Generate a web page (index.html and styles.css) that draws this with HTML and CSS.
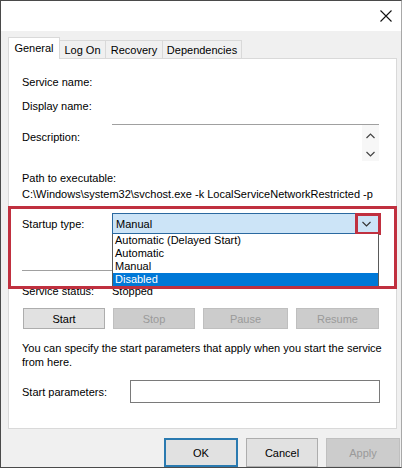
FILE: index.html
```html
<!DOCTYPE html>
<html>
<head>
<meta charset="utf-8">
<link rel="stylesheet" href="styles.css">
</head>
<body>
<div class="window">
  <div class="titlebar">
    <div class="close">
      <svg width="12" height="12" viewBox="0 0 12 12"><path d="M0.5 0.5 L11.5 11.5 M11.5 0.5 L0.5 11.5" stroke="#111" stroke-width="1.1" fill="none"/></svg>
    </div>
  </div>
  <div class="content">
    <div class="tabs">
      <div class="tab active t-general">General</div>
      <div class="tab t-logon">Log On</div>
      <div class="tab t-recovery">Recovery</div>
      <div class="tab t-deps">Dependencies</div>
    </div>
    <div class="panel">
      <div class="row r1"><span class="label">Service name:</span></div>
      <div class="row r2"><span class="label">Display name:</span></div>
      <div class="desc-row">
        <span class="label desc-label">Description:</span>
        <div class="desc-box">
          <div class="scroll">
            <svg width="9" height="6" viewBox="0 0 9 6"><path d="M0.5 5 L4.5 1 L8.5 5" stroke="#444" stroke-width="1.2" fill="none"/></svg>
            <svg width="9" height="6" viewBox="0 0 9 6"><path d="M0.5 1 L4.5 5 L8.5 1" stroke="#444" stroke-width="1.2" fill="none"/></svg>
          </div>
        </div>
      </div>
      <div class="line path-label">Path to executable:</div>
      <div class="line path-value">C:\Windows\system32\svchost.exe -k LocalServiceNetworkRestricted -p</div>
      <div class="startup-row">
        <span class="label">Startup type:</span>
        <div class="combo-wrap">
          <div class="combo">
            <span class="combo-text">Manual</span>
            <svg class="combo-arrow" width="9" height="6" viewBox="0 0 9 6"><path d="M0.5 1 L4.5 5 L8.5 1" stroke="#333" stroke-width="1.1" fill="none"/></svg>
          </div>
          <div class="arrow-mark"></div>
          <ul class="dropdown">
            <li>Automatic (Delayed Start)</li>
            <li>Automatic</li>
            <li>Manual</li>
            <li class="sel">Disabled</li>
          </ul>
        </div>
      </div>
      <div class="separator"></div>
      <div class="status-row">
        <span class="label">Service status:</span>
        <span>Stopped</span>
      </div>
      <div class="btn-row">
        <div class="btn b-start">Start</div>
        <div class="btn disabled b-stop">Stop</div>
        <div class="btn disabled b-pause">Pause</div>
        <div class="btn disabled b-resume">Resume</div>
      </div>
      <div class="info">You can specify the start parameters that apply when you start the service from here.</div>
      <div class="params-row">
        <span class="label params-label">Start parameters:</span>
        <div class="input"></div>
      </div>
    </div>
    <div class="footer">
      <div class="btn fbtn ok">OK</div>
      <div class="btn fbtn cancel">Cancel</div>
      <div class="btn fbtn disabled apply">Apply</div>
    </div>
  </div>
  <div class="highlight"></div>
</div>
</body>
</html>
```

FILE: styles.css
```css
html, body {
  margin: 0;
  padding: 0;
  background: #ffffff;
}
body {
  font-family: "Liberation Sans", Arial, sans-serif;
  font-size: 11px;
  color: #000;
}
.window {
  position: relative;
  width: 402px;
  height: 468px;
  box-sizing: border-box;
  border: 1px solid #4a4a4a;
  border-right-color: #a8a8a8;
  background: #f0f0f0;
}
.titlebar {
  height: 30px;
  background: #fff;
  display: flex;
  justify-content: flex-end;
  align-items: center;
}
.close {
  width: 22px;
  height: 30px;
  margin-right: 4px;
  display: flex;
  align-items: center;
  justify-content: center;
}
.content {
  padding: 6px 1px 0 7px;
}
.tabs {
  display: flex;
  align-items: flex-end;
  height: 21px;
}
.tab {
  box-sizing: border-box;
  height: 18px;
  border: 1px solid #d9d9d9;
  border-bottom: none;
  background: #f0f0f0;
  display: flex;
  align-items: center;
  justify-content: center;
  margin-left: -1px;
  padding-top: 1px;
}
.tab.active {
  height: 22px;
  margin-left: 0;
  margin-bottom: -1px;
  background: #fff;
  position: relative;
  z-index: 2;
  padding-top: 0;
  padding-bottom: 2px;
}
.t-general { width: 52px; }
.t-logon { width: 47px; }
.t-recovery { width: 58px; }
.t-deps { width: 80px; }
.panel {
  position: relative;
  box-sizing: border-box;
  width: 389px;
  height: 371px;
  background: #fff;
  border: 1px solid #d9d9d9;
  padding: 11px 0 0 13px;
}
.row {
  height: 24px;
  display: flex;
  align-items: center;
}
.label {
  line-height: 14px;
}
.desc-row {
  height: 53px;
  display: flex;
}
.desc-label {
  width: 90px;
  margin-top: 12px;
  flex: none;
}
.desc-box {
  margin-top: 6px;
  width: 267px;
  height: 38px;
  box-sizing: border-box;
  border-top: 1px solid #a0a0a0;
  display: flex;
  justify-content: flex-end;
}
.scroll {
  width: 17px;
  height: 36px;
  background: #f7f7f7;
  display: flex;
  flex-direction: column;
  align-items: center;
  justify-content: space-between;
  padding: 8px 0 4px;
  box-sizing: border-box;
  margin-right: 0;
}
.line {
  line-height: 14px;
  white-space: nowrap;
}
.path-value {
  margin-top: 2px;
}
.startup-row {
  margin-top: 12px;
  display: flex;
  align-items: center;
  height: 21px;
}
.startup-row .label {
  width: 90px;
  flex: none;
}
.combo-wrap {
  position: relative;
  width: 267px;
  height: 21px;
}
.combo {
  box-sizing: border-box;
  height: 21px;
  background: #cce4f7;
  border: 1px solid #2a69a0;
  display: flex;
  align-items: center;
  justify-content: space-between;
  padding: 0 7px 0 3px;
}
.arrow-mark {
  position: absolute;
  left: 243px;
  top: 0;
  width: 26px;
  height: 22px;
  box-sizing: border-box;
  border: 3px solid #c0303f;
}
.dropdown {
  position: absolute;
  left: 0;
  top: 21px;
  width: 267px;
  box-sizing: border-box;
  margin: 0;
  padding: 0 0 1px;
  list-style: none;
  background: #fff;
  border: 1px solid #5a5a5a;
  border-top: none;
  z-index: 3;
}
.dropdown li {
  height: 13px;
  line-height: 13px;
  padding-left: 2px;
  white-space: nowrap;
}
.dropdown li.sel {
  background: #0078d7;
  color: #fff;
}
.separator {
  margin-top: 36px;
  width: 357px;
  height: 1px;
  background: #a0a0a0;
}
.status-row {
  margin-top: 13px;
  display: flex;
  line-height: 14px;
}
.status-row .label {
  width: 90px;
  flex: none;
}
.btn-row {
  margin-top: 10px;
  padding-left: 1px;
  display: flex;
  gap: 8px;
}
.btn {
  box-sizing: border-box;
  height: 21px;
  background: #e1e1e1;
  border: 1px solid #adadad;
  display: flex;
  align-items: center;
  justify-content: center;
}
.btn.disabled {
  background: #cccccc;
  border-color: #bfbfbf;
  color: #9a9a9a;
}
.b-start { width: 82px; }
.b-stop { width: 82px; }
.b-pause { width: 85px; }
.b-resume { width: 83px; }
.info {
  margin-top: 12px;
  line-height: 14px;
  width: 360px;
}
.params-row {
  margin-top: 11px;
  display: flex;
  align-items: center;
}
.params-label {
  width: 108px;
  flex: none;
}
.input {
  width: 250px;
  height: 23px;
  box-sizing: border-box;
  border: 1px solid #7a7a7a;
  background: #fff;
}
.footer {
  margin-top: 9px;
  display: flex;
  justify-content: flex-end;
  gap: 8px;
}
.fbtn {
  height: 29px;
}
.ok {
  width: 74px;
  border: 2px solid #2a7ab0;
}
.cancel { width: 72px; }
.apply { width: 74px; }
.highlight {
  position: absolute;
  left: 7px;
  top: 205px;
  width: 389px;
  height: 83px;
  box-sizing: border-box;
  border: 3px solid #c0303f;
  z-index: 5;
  pointer-events: none;
}
```
